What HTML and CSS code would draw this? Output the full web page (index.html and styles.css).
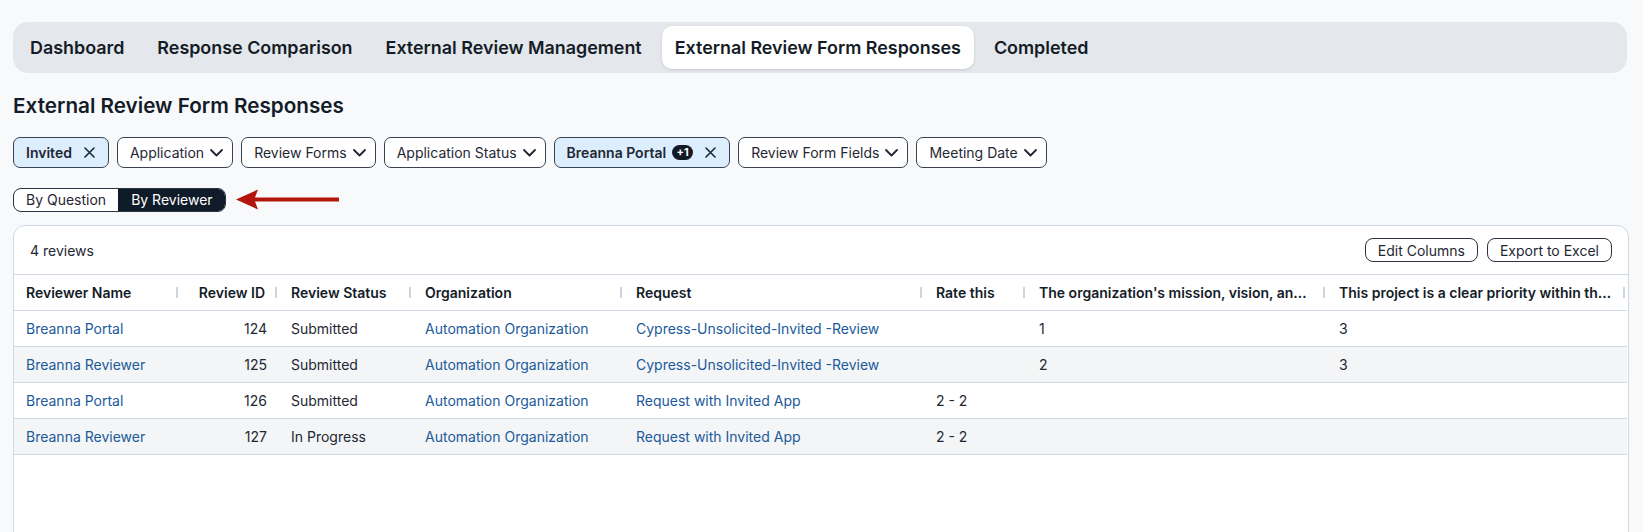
FILE: index.html
```html
<!DOCTYPE html>
<html>

<head>
    <meta charset="UTF-8">
    <title>External Review Form Responses</title>
    <link rel="stylesheet" href="styles.css">
</head>

<body>
    <nav class="tabbar">
        <div class="tab">Dashboard</div>
        <div class="tab">Response Comparison</div>
        <div class="tab">External Review Management</div>
        <div class="tab active">External Review Form Responses</div>
        <div class="tab">Completed</div>
    </nav>

    <h1 class="page-title">External Review Form Responses</h1>

    <div class="filters">
        <div class="chip selected">
            <span class="chip-label">Invited</span>
            <svg class="icon-x" width="11" height="11" viewBox="0 0 11 11"><path d="M1 1L10 10M10 1L1 10" /></svg>
        </div>
        <div class="chip">
            <span>Application</span>
            <svg class="icon-chev" width="13" height="8" viewBox="0 0 13 8"><path d="M1 1L6.5 6.5L12 1" /></svg>
        </div>
        <div class="chip">
            <span>Review Forms</span>
            <svg class="icon-chev" width="13" height="8" viewBox="0 0 13 8"><path d="M1 1L6.5 6.5L12 1" /></svg>
        </div>
        <div class="chip">
            <span>Application Status</span>
            <svg class="icon-chev" width="13" height="8" viewBox="0 0 13 8"><path d="M1 1L6.5 6.5L12 1" /></svg>
        </div>
        <div class="chip selected">
            <span class="chip-label">Breanna Portal</span>
            <span class="badge">+1</span>
            <svg class="icon-x" width="11" height="11" viewBox="0 0 11 11"><path d="M1 1L10 10M10 1L1 10" /></svg>
        </div>
        <div class="chip">
            <span>Review Form Fields</span>
            <svg class="icon-chev" width="13" height="8" viewBox="0 0 13 8"><path d="M1 1L6.5 6.5L12 1" /></svg>
        </div>
        <div class="chip">
            <span>Meeting Date</span>
            <svg class="icon-chev" width="13" height="8" viewBox="0 0 13 8"><path d="M1 1L6.5 6.5L12 1" /></svg>
        </div>
    </div>

    <div class="view-row">
        <div class="toggle">
            <span class="seg">By Question</span>
            <span class="seg on">By Reviewer</span>
        </div>
        <svg class="arrow" width="106" height="24" viewBox="0 0 106 24">
            <path d="M1 11.5L23 1.5L20 9.5L104 9.5L104 13.5L20 13.5L23 21.5Z" fill="#b3140c" />
        </svg>
    </div>

    <section class="card">
        <div class="card-top">
            <span class="count">4 reviews</span>
            <div class="actions">
                <button class="btn">Edit Columns</button>
                <button class="btn">Export to Excel</button>
            </div>
        </div>

        <table class="grid">
            <colgroup>
                <col style="width:166px">
                <col style="width:99px">
                <col style="width:134px">
                <col style="width:211px">
                <col style="width:300px">
                <col style="width:103px">
                <col style="width:300px">
                <col style="width:300px">
            </colgroup>
            <thead>
                <tr>
                    <th>Reviewer Name</th>
                    <th class="num">Review ID</th>
                    <th>Review Status</th>
                    <th>Organization</th>
                    <th>Request</th>
                    <th>Rate this</th>
                    <th>The organization's mission, vision, and values align with this project</th>
                    <th>This project is a clear priority within the organization's strategic plan</th>
                </tr>
            </thead>
            <tbody>
                <tr>
                    <td><a href="#">Breanna Portal</a></td>
                    <td class="num">124</td>
                    <td>Submitted</td>
                    <td><a href="#">Automation Organization</a></td>
                    <td><a href="#">Cypress-Unsolicited-Invited -Review</a></td>
                    <td></td>
                    <td>1</td>
                    <td>3</td>
                </tr>
                <tr>
                    <td><a href="#">Breanna Reviewer</a></td>
                    <td class="num">125</td>
                    <td>Submitted</td>
                    <td><a href="#">Automation Organization</a></td>
                    <td><a href="#">Cypress-Unsolicited-Invited -Review</a></td>
                    <td></td>
                    <td>2</td>
                    <td>3</td>
                </tr>
                <tr>
                    <td><a href="#">Breanna Portal</a></td>
                    <td class="num">126</td>
                    <td>Submitted</td>
                    <td><a href="#">Automation Organization</a></td>
                    <td><a href="#">Request with Invited App</a></td>
                    <td>2 - 2</td>
                    <td></td>
                    <td></td>
                </tr>
                <tr>
                    <td><a href="#">Breanna Reviewer</a></td>
                    <td class="num">127</td>
                    <td>In Progress</td>
                    <td><a href="#">Automation Organization</a></td>
                    <td><a href="#">Request with Invited App</a></td>
                    <td>2 - 2</td>
                    <td></td>
                    <td></td>
                </tr>
            </tbody>
        </table>
    </section>
</body>

</html>
```

FILE: styles.css
```css
* {
    box-sizing: border-box;
}

body {
    margin: 0;
    padding: 22px 14px 0 13px;
    background-color: #f8f9fb;
    color: #1f2733;
    font-family: Inter, "Noto Sans", sans-serif;
    font-size: 14px;
}

/* top tabs */

.tabbar {
    display: flex;
    gap: 7px;
    padding: 4px;
    margin-right: 2px;
    background-color: #e4e7eb;
    border-radius: 15px;
}

.tab {
    height: 43px;
    padding: 0 13px;
    display: flex;
    align-items: center;
    font-size: 17.9px;
    font-weight: 600;
    color: #141c28;
    border-radius: 10px;
}

.tab.active {
    background-color: #fff;
    box-shadow: 0 1px 3px rgba(0, 0, 0, 0.12);
}

.page-title {
    margin: 19px 0 0 0;
    font-size: 20.7px;
    font-weight: 600;
    line-height: 28px;
    color: #141c28;
}

/* filter chips */

.filters {
    display: flex;
    gap: 8px;
    margin-top: 17px;
}

.chip {
    height: 31px;
    padding: 0 9px 0 12px;
    display: flex;
    align-items: center;
    gap: 6px;
    border: 1px solid #3a4250;
    border-radius: 7px;
    background-color: #fff;
    color: #1f2733;
}

.chip.selected {
    background-color: #dcedfd;
    padding: 0 13px 0 12px;
    gap: 0;
}

.chip-label {
    font-weight: 600;
    margin-right: 12px;
}

.chip .badge + .icon-x {
    margin-left: 12px;
}

.badge {
    height: 15px;
    min-width: 21px;
    padding: 0 4px;
    margin-left: -6px;
    border-radius: 8px;
    background-color: #121a26;
    color: #fff;
    font-size: 11px;
    font-weight: 700;
    line-height: 15px;
    text-align: center;
}

.icon-x path,
.icon-chev path {
    fill: none;
    stroke: #1f2733;
    stroke-width: 1.6;
    stroke-linecap: round;
    stroke-linejoin: round;
}

.icon-chev path {
    stroke-width: 1.8;
}

/* view toggle */

.view-row {
    display: flex;
    align-items: center;
    gap: 9px;
    margin-top: 20px;
}

.toggle {
    display: flex;
    height: 24px;
    border: 1px solid #2b3340;
    border-radius: 8px;
    overflow: hidden;
    background-color: #fff;
}

.seg {
    padding: 0 12px 0 12px;
    line-height: 22px;
    color: #1f2733;
}

.seg.on {
    background-color: #101b29;
    color: #fff;
    padding: 0 12px 0 13px;
}

/* results card */

.card {
    margin-top: 13px;
    min-height: 340px;
    background-color: #fff;
    border: 1px solid #cfd8e3;
    border-radius: 12px;
    overflow: hidden;
}

.card-top {
    height: 49px;
    padding: 0 16px;
    display: flex;
    align-items: center;
    justify-content: space-between;
    border-bottom: 1px solid #cfd8e3;
}

.actions {
    display: flex;
    gap: 9px;
}

.btn {
    height: 24px;
    padding: 0 12px;
    border: 1px solid #2b3340;
    border-radius: 8px;
    background-color: #fff;
    color: #1f2733;
    font-family: inherit;
    font-size: 14px;
    cursor: pointer;
}

.grid {
    border-collapse: collapse;
    table-layout: fixed;
    width: 1613px;
}

.grid th,
.grid td {
    padding: 0 12px;
    text-align: left;
    white-space: nowrap;
    overflow: hidden;
    text-overflow: ellipsis;
    border-bottom: 1px solid #cfd8e3;
}

.grid th {
    height: 35px;
    font-weight: 600;
    color: #141c28;
    position: relative;
    padding-right: 14px;
}

.grid th::after {
    content: "";
    position: absolute;
    right: 2px;
    top: 12px;
    width: 2px;
    height: 11px;
    background-color: #cdd5df;
}

.grid td {
    height: 36px;
}

.grid tbody tr:nth-child(even) td {
    background-color: #f3f5f6;
}

.grid .num {
    text-align: right;
}

.grid a {
    color: #1b5a9b;
    text-decoration: none;
}
```
